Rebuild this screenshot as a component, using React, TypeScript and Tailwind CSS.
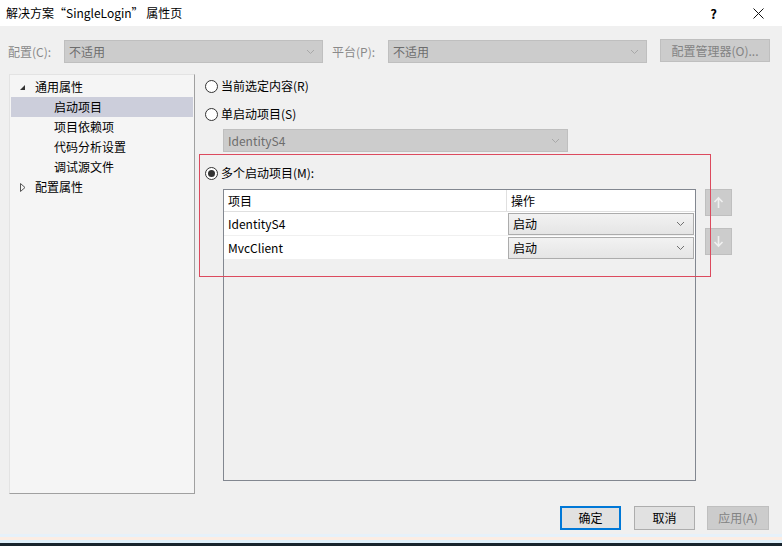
import React from 'react';

const FONT = { fontFamily: '"Noto Sans CJK SC", "Noto Sans", sans-serif' };

function Chevron({ className = '' }: { className?: string }) {
  return (
    <svg width="9" height="6" viewBox="0 0 9 6" className={className}>
      <path d="M1 1 L4.5 4.5 L8 1" fill="none" stroke="currentColor" strokeWidth="1" />
    </svg>
  );
}

function DisabledCombo({ text, width }: { text: string; width: string }) {
  return (
    <div
      className={`flex h-[23px] ${width} items-center justify-between border border-[#bfbfbf] bg-[#cccccc] pl-[4px] pr-[7px] text-[12px] text-[#6d6d6d]`}
    >
      <span>{text}</span>
      <Chevron className="text-[#a8a8a8]" />
    </div>
  );
}

function Radio({ checked, label }: { checked?: boolean; label: string }) {
  return (
    <div className="flex h-[16px] items-center gap-[3px] text-[12px] text-black">
      <span className="flex h-[13px] w-[13px] items-center justify-center rounded-full border border-[#333333] bg-white">
        {checked && <span className="h-[7px] w-[7px] rounded-full bg-[#333333]" />}
      </span>
      <span>{label}</span>
    </div>
  );
}

function TreeRow({ label, indent, selected, glyph }: { label: string; indent: boolean; selected?: boolean; glyph?: 'open' | 'closed' }) {
  return (
    <div
      className={`flex h-[20px] items-center text-[12px] text-black ${selected ? 'bg-[#cccedb]' : ''} ${indent ? 'pl-[43px]' : 'pl-[8px]'}`}
    >
      {glyph && (
        <span className="mr-[9px] flex w-[7px] items-center justify-center">
          {glyph === 'open' ? (
            <svg width="7" height="7" viewBox="0 0 7 7">
              <path d="M6 1 L6 6 L1 6 Z" fill="#333333" />
            </svg>
          ) : (
            <svg width="6" height="9" viewBox="0 0 6 9">
              <path d="M0.5 0.5 L5 4.5 L0.5 8.5 Z" fill="none" stroke="#555555" strokeWidth="1" />
            </svg>
          )}
        </span>
      )}
      <span>{label}</span>
    </div>
  );
}

function ActionCombo() {
  return (
    <div className="mx-[1px] flex h-[22px] items-center justify-between border border-[#acacac] bg-gradient-to-b from-[#f2f2f2] to-[#e5e5e5] pl-[4px] pr-[8px] text-[12px] text-black">
      <span>启动</span>
      <Chevron className="text-[#707070]" />
    </div>
  );
}

function ArrowButton({ up }: { up?: boolean }) {
  return (
    <div className="flex h-[27px] w-[27px] items-center justify-center border border-[#bfbfbf] bg-[#cccccc]">
      <svg width="11" height="13" viewBox="0 0 11 13">
        {up ? (
          <path d="M5.5 12 L5.5 2 M1.5 6 L5.5 2 L9.5 6" fill="none" stroke="#f0f0f0" strokeWidth="1.6" />
        ) : (
          <path d="M5.5 1 L5.5 11 M1.5 7 L5.5 11 L9.5 7" fill="none" stroke="#f0f0f0" strokeWidth="1.6" />
        )}
      </svg>
    </div>
  );
}

export default function App() {
  return (
    <div className="relative flex h-[546px] w-[782px] flex-col overflow-hidden bg-[#f0f0f0] leading-none" style={FONT}>
      {/* title bar */}
      <div className="flex h-[26px] shrink-0 items-center bg-white pl-[6px] text-[12px] text-black">
        <span>解决方案“SingleLogin” 属性页</span>
        <span className="ml-auto mr-[36px] text-[13px] font-semibold">?</span>
        <svg width="11" height="11" viewBox="0 0 11 11" className="mr-[18px]">
          <path d="M0.5 0.5 L10.5 10.5 M10.5 0.5 L0.5 10.5" stroke="#111111" strokeWidth="1" />
        </svg>
      </div>

      {/* configuration row */}
      <div className="mt-[14px] flex h-[23px] items-center text-[12px]">
        <span className="w-[64px] shrink-0 pl-[8px] text-[#8a8a8a]">配置(C):</span>
        <DisabledCombo text="不适用" width="w-[259px]" />
        <span className="ml-[9px] w-[56px] shrink-0 text-[#8a8a8a]">平台(P):</span>
        <DisabledCombo text="不适用" width="w-[259px]" />
        <div className="ml-[13px] flex h-[23px] w-[110px] -translate-y-[1px] items-center justify-center border border-[#bfbfbf] bg-[#cccccc] text-[12px] text-[#838383]">
          配置管理器(O)...
        </div>
      </div>

      {/* main */}
      <div className="mt-[11px] flex h-[420px]">
        <div className="ml-[9px] flex w-[186px] flex-col border border-[#a0a0a0] border-l-[#e3e3e3] border-t-[#e3e3e3] bg-[#f5f5f5] pt-[2px] pl-[1px] pr-[1px]">
          <TreeRow label="通用属性" indent={false} glyph="open" />
          <TreeRow label="启动项目" indent selected />
          <TreeRow label="项目依赖项" indent />
          <TreeRow label="代码分析设置" indent />
          <TreeRow label="调试源文件" indent />
          <TreeRow label="配置属性" indent={false} glyph="closed" />
        </div>

        <div className="ml-[10px] flex flex-1 flex-col">
          <div className="mt-[4px]">
            <Radio label="当前选定内容(R)" />
          </div>
          <div className="mt-[12px]">
            <Radio label="单启动项目(S)" />
          </div>
          <div className="ml-[18px] mt-[7px]">
            <DisabledCombo text="IdentityS4" width="w-[345px]" />
          </div>
          <div className="mt-[13px]">
            <Radio checked label="多个启动项目(M):" />
          </div>

          <div className="mt-[8px] flex">
            <div className="ml-[18px] flex h-[292px] w-[473px] flex-col border border-[#828790] bg-[#f0f0f0]">
              <div className="flex h-[22px] border-b border-[#e0e0e0] bg-white text-[12px] text-black">
                <div className="flex w-[283px] items-center border-r border-[#e0e0e0] pl-[4px]">项目</div>
                <div className="flex flex-1 items-center pl-[4px]">操作</div>
              </div>
              {['IdentityS4', 'MvcClient'].map((name) => (
                <div key={name} className="flex h-[24px] border-b border-[#f0f0f0] bg-white text-[12px] text-black">
                  <div className="flex w-[283px] items-center pl-[4px]">{name}</div>
                  <div className="flex flex-1 items-center">
                    <div className="w-full">
                      <ActionCombo />
                    </div>
                  </div>
                </div>
              ))}
            </div>
            <div className="ml-[9px] flex flex-col gap-[12px]">
              <ArrowButton up />
              <ArrowButton />
            </div>
          </div>
        </div>
      </div>

      {/* bottom buttons */}
      <div className="mt-[12px] flex h-[24px] justify-end pr-[13px] text-[12px]">
        <div className="flex w-[61px] items-center justify-center border-2 border-[#0078d7] bg-[#e1e1e1] text-black">确定</div>
        <div className="ml-[13px] flex w-[61px] items-center justify-center border border-[#adadad] bg-[#e1e1e1] text-black">取消</div>
        <div className="ml-[12px] flex w-[62px] items-center justify-center border border-[#bfbfbf] bg-[#cccccc] text-[#838383]">应用(A)</div>
      </div>

      {/* bottom edge strip */}
      <div className="mt-auto flex flex-col">
        <div className="h-[3px] bg-[#e6f1fa]" />
        <div className="h-[3px] bg-[#fbede4]" />
        <div className="h-[3px] bg-[#dff0fb]" />
        <div className="h-[3px] bg-[#18242d]" />
      </div>

      {/* red highlight annotation */}
      <div className="pointer-events-none absolute left-[199px] top-[154px] h-[123px] w-[512px] border border-[#dc4a5e]" />
    </div>
  );
}
